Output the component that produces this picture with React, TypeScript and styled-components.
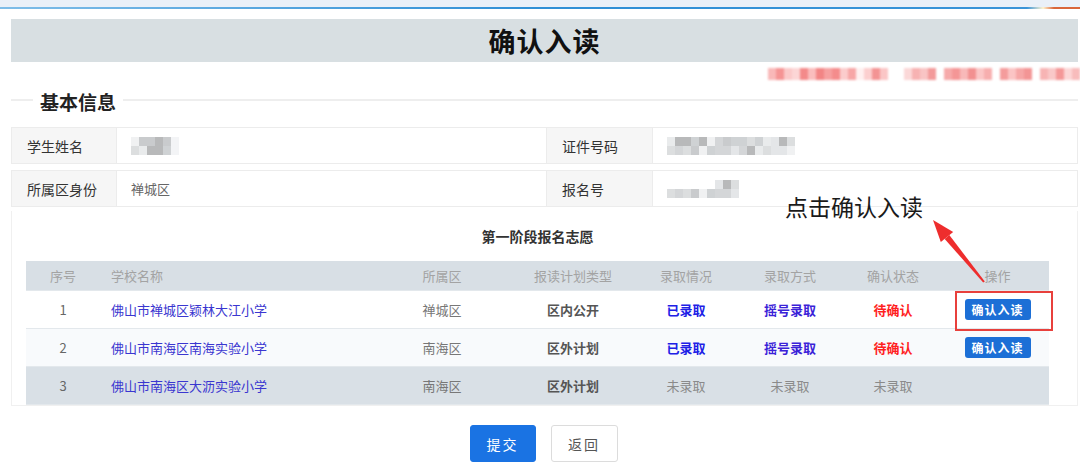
import React from "react";
import styled, { createGlobalStyle } from "styled-components";

const GlobalStyle = createGlobalStyle`
  html, body {
    margin: 0;
    padding: 0;
    background: #fff;
  }
  body {
    font-family: "Noto Sans CJK SC", "Noto Sans", "Liberation Sans", sans-serif;
    color: #333;
  }
`;

const Page = styled.div`
  width: 1080px;
  height: 476px;
  overflow: hidden;
  position: relative;
  background: #fff;
`;

const TopStrip = styled.div`
  height: 7px;
  background: #eaf0f8;
  border-bottom: 2px solid transparent;
  border-image: linear-gradient(90deg, #7fbde8 0%, #2f8fd6 50%, #3a94d8 95%, #fff3d0 96.5%, #d9663a 97.5%, #d9663a 100%) 1;
`;

const Content = styled.div`
  padding: 10px 2px 0 11px;
`;

const TitleBar = styled.div`
  height: 43px;
  background: #d8dfe2;
  display: flex;
  align-items: center;
  justify-content: center;
  font-size: 27px;
  font-weight: 700;
  color: #111;
  letter-spacing: 1px;
`;

const NoticeRow = styled.div`
  height: 20px;
  display: flex;
  justify-content: flex-end;
  align-items: center;
  padding-top: 2px;
  margin-right: -2px;
`;

const Blocks = styled.div`
  display: flex;
  filter: blur(1px);
`;

const Block = styled.span<{ $c: string; $w?: number }>`
  display: block;
  width: ${(p) => p.$w ?? 7}px;
  height: 12px;
  background: ${(p) => p.$c};
`;

const SectionHead = styled.div`
  display: flex;
  align-items: center;
  height: 34px;
`;

const HeadLine = styled.div<{ $grow?: boolean }>`
  height: 2px;
  background: #eeeeee;
  width: 22px;
  flex: ${(p) => (p.$grow ? 1 : "none")};
  margin-top: -3px;
`;

const HeadText = styled.div`
  font-size: 19px;
  font-weight: 700;
  color: #222;
  padding: 0 7px;
`;

const InfoRows = styled.div`
  display: flex;
  flex-direction: column;
  gap: 6px;
  margin-top: 9px;
`;

const InfoRow = styled.div`
  display: grid;
  grid-template-columns: 105px 430px 106px 1fr;
  height: 37px;
  border: 1px solid #ececec;
  box-sizing: border-box;
`;

const Label = styled.div`
  background: #f6f6f6;
  border-right: 1px solid #ececec;
  display: flex;
  align-items: center;
  padding-left: 15px;
  font-size: 14px;
  color: #333;
`;

const Value = styled.div`
  display: flex;
  align-items: center;
  padding-left: 14px;
  font-size: 13px;
  color: #666;
  border-right: 1px solid #ececec;
  &:last-child {
    border-right: none;
  }
`;

const Mosaic = styled.div<{ $cols: number }>`
  display: grid;
  grid-template-columns: repeat(${(p) => p.$cols}, 8px);
  grid-auto-rows: 9px;
  filter: blur(0.6px);
`;

const Tile = styled.span<{ $c: string }>`
  background: ${(p) => p.$c};
`;

const Panel = styled.div`
  margin-top: 4px;
  border: 1px solid #f0f0f0;
  border-top: none;
  padding: 0 28px 0 14px;
  position: relative;
`;

const PanelTitle = styled.div`
  height: 50px;
  display: flex;
  align-items: center;
  justify-content: center;
  font-size: 14px;
  font-weight: 700;
  color: #333;
`;

const Table = styled.div`
  display: flex;
  flex-direction: column;
`;

const Row = styled.div<{ $bg: string; $h: number }>`
  display: grid;
  grid-template-columns: 74px 285px 114px 148px 78px 130px 76px 119px;
  height: ${(p) => p.$h}px;
  background: ${(p) => p.$bg};
  border-bottom: 1px solid #e3e8ec;
  box-sizing: border-box;
`;

const Cell = styled.div<{ $left?: boolean; $shift?: number }>`
  display: flex;
  align-items: center;
  justify-content: ${(p) => (p.$left ? "flex-start" : "center")};
  padding-left: ${(p) => (p.$left ? 11 : p.$shift ?? 0)}px;
  font-size: 13px;
  position: relative;
`;

const HeadCell = styled(Cell)`
  color: #a3a3a3;
`;

type Tone = "num" | "link" | "plain" | "strong" | "blue" | "purple" | "red" | "muted";

const toneColor: Record<Tone, string> = {
  num: "#666",
  link: "#3a36d0",
  plain: "#777",
  strong: "#555",
  blue: "#2020e6",
  purple: "#3b22d8",
  red: "#ff1f1f",
  muted: "#8a8a8a",
};

const Txt = styled.span<{ $tone: Tone }>`
  color: ${(p) => toneColor[p.$tone]};
  font-weight: ${(p) => (["strong", "blue", "purple", "red"].includes(p.$tone) ? 700 : 400)};
`;

const SmallBtn = styled.button`
  width: 66px;
  height: 21px;
  border: none;
  border-radius: 3px;
  background: #1c6fd6;
  color: #fff;
  font-family: inherit;
  font-size: 12px;
  font-weight: 700;
  letter-spacing: 1px;
  padding: 0;
  cursor: pointer;
`;

const Highlight = styled.div`
  position: absolute;
  left: 24px;
  top: 0;
  width: 98px;
  height: 40px;
  border: 2px solid #e8403c;
  box-sizing: border-box;
  pointer-events: none;
`;

const Annotation = styled.div`
  position: absolute;
  left: 773px;
  top: -22px;
  font-size: 23px;
  color: #1a1a1a;
  white-space: nowrap;
`;

const Arrow = styled.svg`
  position: absolute;
  left: 900px;
  top: 0;
  overflow: visible;
  pointer-events: none;
`;

const Footer = styled.div`
  display: flex;
  justify-content: center;
  gap: 15px;
  padding-top: 19px;
  padding-right: 2px;
`;

const Btn = styled.button<{ $primary?: boolean }>`
  width: ${(p) => (p.$primary ? 66 : 67)}px;
  height: 37px;
  border-radius: 3px;
  font-family: inherit;
  font-size: 14px;
  letter-spacing: 2px;
  cursor: pointer;
  border: 1px solid ${(p) => (p.$primary ? "#1a73e3" : "#dcdcdc")};
  background: ${(p) => (p.$primary ? "#1a73e3" : "#fff")};
  color: ${(p) => (p.$primary ? "#fff" : "#555")};
`;

const noticeBlocks = [
  "#f9b8b8", "#f59494", "#fbc9c9", "#fcd6d6", "#f38a8a", "#fabdbd", "#f28585", "#f6a0a0",
  "#f48c8c", "#fbcccc", "#f7a6a6", "#fff0f0", "#fccfcf", "#f39494", "#fbc6c6", "#fff", "#fff",
  "#fbd8d8", "#f7b2b2", "#f9c4c4", "#f39a9a", "#fff", "#f6aaaa", "#f49696", "#f8b9b9", "#f29090",
  "#fbc6c6", "#f7aeae", "#fff", "#f49c9c", "#fbc4c4", "#f6a6a6", "#f39595", "#fff", "#f7b4b4",
  "#f9c8c8", "#f49898", "#fcd6d6", "#f8bcbc",
];

const grays = ["#e4e6e8", "#c9cbcd", "#dcdedf", "#f0f1f2", "#b8b9ba", "#d4d6d8", "#e9ebec", "#cfd2d4"];
const mosaic = (n: number, seed: number) =>
  Array.from({ length: n }, (_, i) => grays[(i * 5 + seed * 3 + ((i * i) % 7)) % grays.length]);

type School = {
  no: string;
  name: string;
  district: string;
  plan: string;
  result: [string, Tone];
  method: [string, Tone];
  status: [string, Tone];
  action: boolean;
  bg: string;
};

const schools: School[] = [
  {
    no: "1",
    name: "佛山市禅城区颖林大江小学",
    district: "禅城区",
    plan: "区内公开",
    result: ["已录取", "blue"],
    method: ["摇号录取", "purple"],
    status: ["待确认", "red"],
    action: true,
    bg: "#ffffff",
  },
  {
    no: "2",
    name: "佛山市南海区南海实验小学",
    district: "南海区",
    plan: "区外计划",
    result: ["已录取", "blue"],
    method: ["摇号录取", "purple"],
    status: ["待确认", "red"],
    action: true,
    bg: "#f8fafc",
  },
  {
    no: "3",
    name: "佛山市南海区大沥实验小学",
    district: "南海区",
    plan: "区外计划",
    result: ["未录取", "muted"],
    method: ["未录取", "muted"],
    status: ["未录取", "muted"],
    action: false,
    bg: "#d9e0e6",
  },
];

const headers = ["序号", "学校名称", "所属区", "报读计划类型", "录取情况", "录取方式", "确认状态", "操作"];

export default function App() {
  return (
    <Page>
      <GlobalStyle />
      <TopStrip />
      <Content>
        <TitleBar>确认入读</TitleBar>
        <NoticeRow>
          <Blocks>
            {noticeBlocks.map((c, i) => (
              <Block key={i} $c={c} $w={8} />
            ))}
          </Blocks>
        </NoticeRow>

        <SectionHead>
          <HeadLine />
          <HeadText>基本信息</HeadText>
          <HeadLine $grow />
        </SectionHead>

        <InfoRows>
          <InfoRow>
            <Label>学生姓名</Label>
            <Value>
              <Mosaic $cols={6}>
                {mosaic(12, 1).map((c, i) => (
                  <Tile key={i} $c={i % 6 > 4 ? "#f3f4f6" : c} />
                ))}
              </Mosaic>
            </Value>
            <Label>证件号码</Label>
            <Value>
              <Mosaic $cols={16}>
                {mosaic(32, 2).map((c, i) => (
                  <Tile key={i} $c={c} />
                ))}
              </Mosaic>
            </Value>
          </InfoRow>
          <InfoRow>
            <Label>所属区身份</Label>
            <Value>禅城区</Value>
            <Label>报名号</Label>
            <Value>
              <Mosaic $cols={9}>
                {mosaic(18, 3).map((c, i) => (
                  <Tile key={i} $c={i < 6 ? "#fff" : c} />
                ))}
              </Mosaic>
            </Value>
          </InfoRow>
        </InfoRows>

        <Panel>
          <Annotation>点击确认入读</Annotation>
          <Arrow width="90" height="80" viewBox="0 0 90 80">
            <polygon points="72.8,70.4 71.2,71.6 32.7,27.9 37.3,24.1" fill="#ee2d2d" />
            <polygon points="21,9 41.2,20.9 28.8,31.1" fill="#ee2d2d" />
          </Arrow>
          <PanelTitle>第一阶段报名志愿</PanelTitle>
          <Table>
            <Row $bg="#d8dfe5" $h={30}>
              {headers.map((h, i) => (
                <HeadCell key={h} $left={i === 1} $shift={i === 7 ? 14 : 0}>
                  {h}
                </HeadCell>
              ))}
            </Row>
            {schools.map((s, idx) => (
              <Row key={s.no} $bg={s.bg} $h={38}>
                <Cell>
                  <Txt $tone="num">{s.no}</Txt>
                </Cell>
                <Cell $left>
                  <Txt $tone="link">{s.name}</Txt>
                </Cell>
                <Cell>
                  <Txt $tone="plain">{s.district}</Txt>
                </Cell>
                <Cell>
                  <Txt $tone="strong">{s.plan}</Txt>
                </Cell>
                <Cell>
                  <Txt $tone={s.result[1]}>{s.result[0]}</Txt>
                </Cell>
                <Cell>
                  <Txt $tone={s.method[1]}>{s.method[0]}</Txt>
                </Cell>
                <Cell>
                  <Txt $tone={s.status[1]}>{s.status[0]}</Txt>
                </Cell>
                <Cell $shift={14}>
                  {s.action && <SmallBtn>确认入读</SmallBtn>}
                  {idx === 0 && <Highlight />}
                </Cell>
              </Row>
            ))}
          </Table>
        </Panel>

        <Footer>
          <Btn $primary>提交</Btn>
          <Btn>返回</Btn>
        </Footer>
      </Content>
    </Page>
  );
}
